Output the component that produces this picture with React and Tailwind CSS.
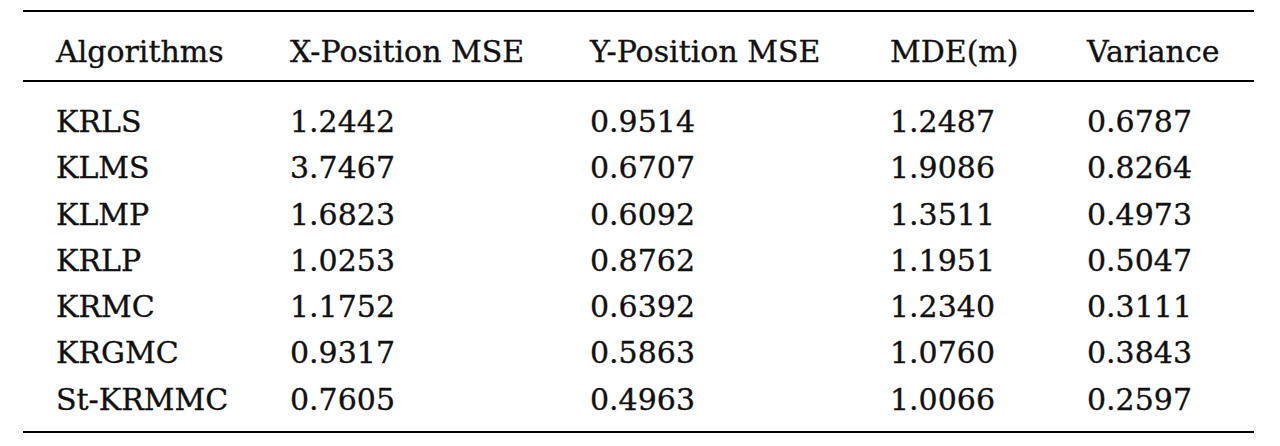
import React from 'react';

const rows = [
    ['KRLS', '1.2442', '0.9514', '1.2487', '0.6787'],
    ['KLMS', '3.7467', '0.6707', '1.9086', '0.8264'],
    ['KLMP', '1.6823', '0.6092', '1.3511', '0.4973'],
    ['KRLP', '1.0253', '0.8762', '1.1951', '0.5047'],
    ['KRMC', '1.1752', '0.6392', '1.2340', '0.3111'],
    ['KRGMC', '0.9317', '0.5863', '1.0760', '0.3843'],
    ['St-KRMMC', '0.7605', '0.4963', '1.0066', '0.2597'],
];

const headers = ['Algorithms', 'X-Position MSE', 'Y-Position MSE', 'MDE(m)', 'Variance'];

const cols = 'grid grid-cols-[234px_300px_300px_197px_1fr] pl-[33px]';

const App = () => {
    return (
        <div
            className="w-[1280px] h-[446px] bg-white pt-[10px] pl-[23px] text-[#111]"
            style={{ fontFamily: '"DejaVu Serif", "Liberation Serif", serif' }}
        >
            <div className="w-[1231px] border-t-2 border-b-2 border-black text-[30px] leading-[46px] [-webkit-text-stroke:0.35px_#111]">
                {/* Header */}
                <div className={`${cols} pt-[17px] pb-[5px] border-b-2 border-black`}>
                    {headers.map((h) => (
                        <div key={h} className="whitespace-nowrap">{h}</div>
                    ))}
                </div>

                {/* Body */}
                <div className="pt-[17px] pb-[8px]">
                    {rows.map((r) => (
                        <div key={r[0]} className={`${cols} h-[46.3px]`}>
                            {r.map((c, i) => (
                                <div key={i} className="whitespace-nowrap">{c}</div>
                            ))}
                        </div>
                    ))}
                </div>
            </div>
        </div>
    );
};

export default App;
